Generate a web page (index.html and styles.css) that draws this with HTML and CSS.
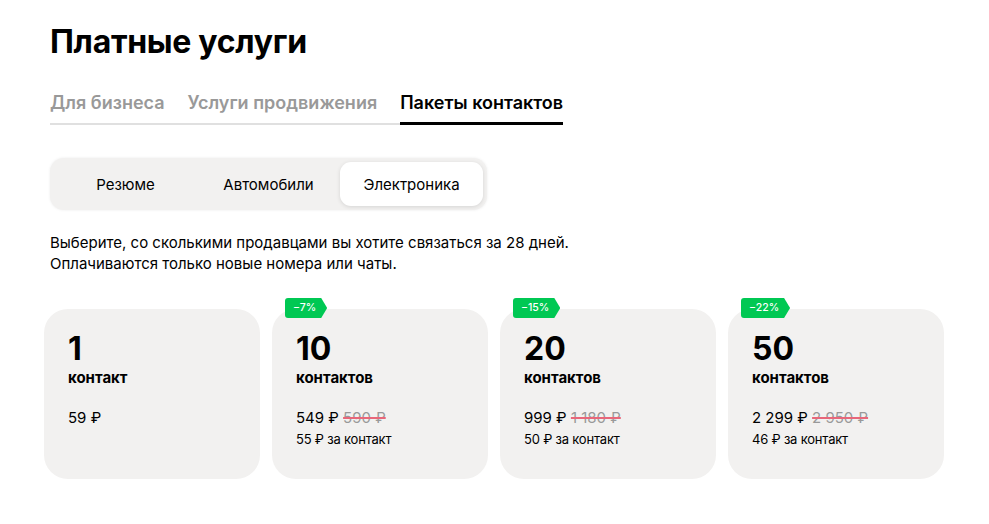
FILE: index.html
```html
<!DOCTYPE html>
<html lang="ru">
<head>
    <meta charset="UTF-8">
    <meta name="viewport" content="width=device-width, initial-scale=1.0">
    <title>Платные услуги</title>
    <link rel="stylesheet" href="styles.css">
</head>
<body>

    <main class="page">
        <h1 class="page-title">Платные услуги</h1>

        <!-- Main tabs -->
        <nav class="tabs">
            <a href="#" class="tab">Для бизнеса</a>
            <a href="#" class="tab">Услуги продвижения</a>
            <a href="#" class="tab tab-active">Пакеты контактов</a>
        </nav>

        <!-- Category switch -->
        <div class="segments">
            <button class="segment">Резюме</button>
            <button class="segment">Автомобили</button>
            <button class="segment segment-active">Электроника</button>
        </div>

        <p class="description">
            Выберите, со сколькими продавцами вы хотите связаться за 28 дней.<br>
            Оплачиваются только новые номера или чаты.
        </p>

        <!-- Packages -->
        <div class="packages">
            <div class="package">
                <div class="package-count">1</div>
                <div class="package-unit">контакт</div>
                <div class="package-price">59 ₽</div>
            </div>

            <div class="package">
                <span class="badge">−7%</span>
                <div class="package-count">10</div>
                <div class="package-unit">контактов</div>
                <div class="package-price">549 ₽ <s class="old-price">590 ₽</s></div>
                <div class="package-per">55 ₽ за контакт</div>
            </div>

            <div class="package">
                <span class="badge">−15%</span>
                <div class="package-count">20</div>
                <div class="package-unit">контактов</div>
                <div class="package-price">999 ₽ <s class="old-price">1 180 ₽</s></div>
                <div class="package-per">50 ₽ за контакт</div>
            </div>

            <div class="package">
                <span class="badge">−22%</span>
                <div class="package-count">50</div>
                <div class="package-unit">контактов</div>
                <div class="package-price">2 299 ₽ <s class="old-price">2 950 ₽</s></div>
                <div class="package-per">46 ₽ за контакт</div>
            </div>
        </div>
    </main>

</body>
</html>
```

FILE: styles.css
```css
body {
    margin: 0;
    background: #fff;
    color: #000;
    font-family: Inter, "Noto Sans", sans-serif;
}

.page {
    padding: 22px 50px 0;
}

.page-title {
    margin: 0;
    font-size: 32px;
    font-weight: 700;
    line-height: 40px;
    letter-spacing: -0.3px;
}

.tabs {
    display: flex;
    width: fit-content;
    gap: 23px;
    margin-top: 29px;
    border-bottom: 2px solid #e0e0e0;
}

.tab {
    color: #999;
    text-decoration: none;
    font-size: 18px;
    font-weight: 600;
    line-height: 24px;
    padding-bottom: 7px;
    margin-bottom: -2px;
    border-bottom: 3px solid transparent;
}

.tab-active {
    color: #000;
    border-bottom-color: #000;
}

.segments {
    display: inline-flex;
    margin-top: 33px;
    padding: 4px;
    background: #f2f1f0;
    border-radius: 14px;
    box-shadow: 0 0 3px rgba(0, 0, 0, 0.08);
}

.segment {
    width: 143px;
    height: 44px;
    border: none;
    background: transparent;
    border-radius: 11px;
    font-family: inherit;
    font-size: 15px;
    color: #000;
}

.segment-active {
    background: #fff;
    box-shadow: 0 1px 4px rgba(0, 0, 0, 0.12);
}

.description {
    margin: 22px 0 0;
    font-size: 15px;
    line-height: 21px;
}

.packages {
    display: flex;
    gap: 12px;
    margin: 35px 0 0 -6px;
}

.package {
    position: relative;
    flex-shrink: 0;
    width: 216px;
    height: 170px;
    box-sizing: border-box;
    padding: 22px 24px;
    background: #f2f1f0;
    border-radius: 24px;
}

.badge {
    position: absolute;
    top: -11px;
    left: 13px;
    height: 20px;
    padding: 0 11px 0 8px;
    background: #00c853;
    color: #fff;
    font-size: 10.5px;
    font-weight: 500;
    line-height: 20px;
    border-radius: 3px 0 0 3px;
    clip-path: polygon(0 0, calc(100% - 6px) 0, 100% 50%, calc(100% - 6px) 100%, 0 100%);
}

.package-count {
    font-size: 32px;
    font-weight: 700;
    line-height: 36px;
}

.package-unit {
    margin-top: 1px;
    font-size: 15px;
    font-weight: 700;
    line-height: 20px;
}

.package-price {
    margin-top: 20px;
    font-size: 15px;
    line-height: 20px;
}

.old-price {
    color: #999;
    text-decoration-color: #e8677a;
    text-decoration-thickness: 1.5px;
}

.package-per {
    margin-top: 2px;
    font-size: 13px;
    line-height: 18px;
    letter-spacing: -0.2px;
}
```
